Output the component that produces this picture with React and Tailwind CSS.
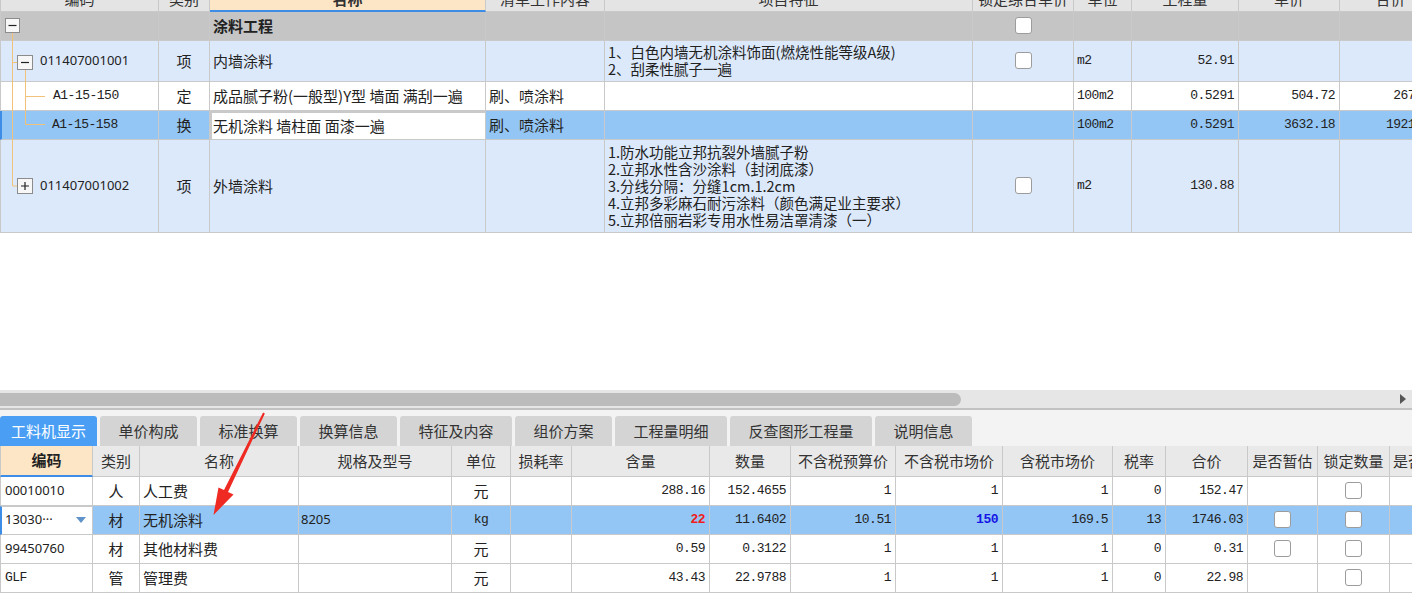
import React from 'react';

const TOP_GRID = 'grid grid-cols-[159px_51px_276px_119px_368px_101px_58px_107px_101px_102px] w-[1442px]';
const BOT_GRID = 'grid grid-cols-[93px_47px_159px_153px_59px_61px_138px_81px_105px_107px_110px_53px_82px_70px_72px_70px] w-[1460px]';
const MONO = "font-['Liberation_Mono',monospace] text-[13px] tracking-[-0.5px]";
const DIGI = "font-['Noto_Sans',sans-serif] text-[13px]";

const Cell = ({ className = '', children }) => (
  <div className={`flex items-center overflow-hidden whitespace-nowrap pb-[2px] border-r border-b border-[#c9c9c9] ${className}`}>
    {children}
  </div>
);

const Check = () => (
  <span className="block w-[17px] h-[17px] bg-white border border-[#9c9c9c] rounded-[3px]" />
);

const TreeLines = () => (
  <svg className="absolute left-0 top-0 pointer-events-none" width="159" height="233">
    <g stroke="#f3c27a" strokeWidth="1" fill="none">
      <path d="M12.5 33 V186 H17" />
      <path d="M12.5 62.5 H17" />
      <path d="M25.5 70 V124.5 H45" />
      <path d="M25.5 96.5 H45" />
    </g>
    <g fill="#f7f7f7" stroke="#8c8c8c">
      <rect x="5.5" y="18.5" width="14" height="14" />
      <rect x="17.5" y="55.5" width="15" height="14" />
      <rect x="17.5" y="178.5" width="15" height="15" />
    </g>
    <g stroke="#222" strokeWidth="1.2">
      <path d="M8.5 25.5 H16.5" />
      <path d="M21 62.5 H29" />
      <path d="M21 186 H29 M25 182 V190" />
    </g>
  </svg>
);

const Arrow = () => (
  <svg className="absolute left-0 top-0 pointer-events-none" width="1412" height="599">
    <polygon
      points="263.1,412.6 264.9,413.4 228,492 233.5,494.5 213.5,515 218.5,487.5 224,490"
      fill="#ee2a22"
    />
  </svg>
);

const TopTable = () => (
  <div className="relative h-[233px] overflow-hidden">
    {/* header (cut at top) */}
    <div className={`${TOP_GRID} h-[24px] -mt-[12px] bg-[#e4e4e4] text-[#333]`}>
      <Cell className="justify-center border-l border-l-[#c9c9c9]">编码</Cell>
      <Cell className="justify-center">类别</Cell>
      <Cell className="justify-center bg-[#fde6c6] border-b-2 border-b-[#3d8de6] font-bold">名称</Cell>
      <Cell className="justify-center">清单工作内容</Cell>
      <Cell className="justify-center">项目特征</Cell>
      <Cell className="justify-center">锁定综合单价</Cell>
      <Cell className="justify-center">单位</Cell>
      <Cell className="justify-center">工程量</Cell>
      <Cell className="justify-center">单价</Cell>
      <Cell className="justify-center">合价</Cell>
    </div>

    <div className={`${TOP_GRID} h-[29px] bg-[#c5c5c5]`}>
      <Cell className="border-l border-l-[#c9c9c9]" />
      <Cell />
      <Cell className="pl-[3px] font-bold">涂料工程</Cell>
      <Cell />
      <Cell />
      <Cell className="justify-center"><Check /></Cell>
      <Cell />
      <Cell />
      <Cell />
      <Cell />
    </div>

    <div className={`${TOP_GRID} h-[41px] bg-[#dce9fb]`}>
      <Cell className={`pl-[39px] border-l border-l-[#c9c9c9] ${DIGI}`}>011407001001</Cell>
      <Cell className="justify-center">项</Cell>
      <Cell className="pl-[3px]">内墙涂料</Cell>
      <Cell />
      <Cell className="pl-[3px]">
        <div className="leading-[17px] text-[14.5px]">
          <div>1、白色内墙无机涂料饰面(燃烧性能等级A级)</div>
          <div>2、刮柔性腻子一遍</div>
        </div>
      </Cell>
      <Cell className="justify-center"><Check /></Cell>
      <Cell className={`pl-[3px] ${MONO}`}>m2</Cell>
      <Cell className={`justify-end pr-[4px] ${MONO}`}>52.91</Cell>
      <Cell />
      <Cell />
    </div>

    <div className={`${TOP_GRID} h-[29px] bg-white`}>
      <Cell className={`pl-[52px] border-l border-l-[#c9c9c9] ${MONO}`}>A1-15-150</Cell>
      <Cell className="justify-center">定</Cell>
      <Cell className="pl-[3px]">成品腻子粉(一般型)Y型 墙面 满刮一遍</Cell>
      <Cell className="pl-[3px]">刷、喷涂料</Cell>
      <Cell />
      <Cell />
      <Cell className={`pl-[3px] ${MONO}`}>100m2</Cell>
      <Cell className={`justify-end pr-[4px] ${MONO}`}>0.5291</Cell>
      <Cell className={`justify-end pr-[4px] ${MONO}`}>504.72</Cell>
      <Cell className={`justify-end pr-[4px] ${MONO}`}>267.05</Cell>
    </div>

    <div className={`${TOP_GRID} h-[29px] bg-[#93c6f4]`}>
      <Cell className={`pl-[50px] border-l-2 border-l-[#3d8de6] ${MONO}`}>A1-15-158</Cell>
      <Cell className="justify-center">换</Cell>
      <Cell className="pl-[1px] bg-white border-2 border-[#3d8de6]">无机涂料 墙柱面 面漆一遍</Cell>
      <Cell className="pl-[3px]">刷、喷涂料</Cell>
      <Cell />
      <Cell />
      <Cell className={`pl-[3px] ${MONO}`}>100m2</Cell>
      <Cell className={`justify-end pr-[4px] ${MONO}`}>0.5291</Cell>
      <Cell className={`justify-end pr-[4px] ${MONO}`}>3632.18</Cell>
      <Cell className={`justify-end pr-[4px] ${MONO}`}>1921.79</Cell>
    </div>

    <div className={`${TOP_GRID} h-[93px] bg-[#dce9fb]`}>
      <Cell className={`pl-[39px] border-l border-l-[#c9c9c9] ${DIGI}`}>011407001002</Cell>
      <Cell className="justify-center">项</Cell>
      <Cell className="pl-[3px]">外墙涂料</Cell>
      <Cell />
      <Cell className="pl-[3px]">
        <div className="leading-[17px] text-[14.5px]">
          <div>1.防水功能立邦抗裂外墙腻子粉</div>
          <div>2.立邦水性含沙涂料（封闭底漆）</div>
          <div>3.分线分隔：分缝1cm.1.2cm</div>
          <div>4.立邦多彩麻石耐污涂料（颜色满足业主要求）</div>
          <div>5.立邦倍丽岩彩专用水性易洁罩清漆（一）</div>
        </div>
      </Cell>
      <Cell className="justify-center"><Check /></Cell>
      <Cell className={`pl-[3px] ${MONO}`}>m2</Cell>
      <Cell className={`justify-end pr-[4px] ${MONO}`}>130.88</Cell>
      <Cell />
      <Cell />
    </div>

    <TreeLines />
  </div>
);

const tabs = ['工料机显示', '单价构成', '标准换算', '换算信息', '特征及内容', '组价方案', '工程量明细', '反查图形工程量', '说明信息'];
const tabW = ['w-[97px]', 'w-[97px]', 'w-[97px]', 'w-[97px]', 'w-[112px]', 'w-[97px]', 'w-[112px]', 'w-[142px]', 'w-[97px]'];

const rows = [
  { code: '00010010', type: '人', name: '人工费', spec: '', unit: '元', qty: '288.16', num: '152.4655', p1: '1', p2: '1', p3: '1', tax: '0', sum: '152.47', est: false, lock: true },
  { code: '13030···', type: '材', name: '无机涂料', spec: '8205', unit: 'kg', qty: '22', num: '11.6402', p1: '10.51', p2: '150', p3: '169.5', tax: '13', sum: '1746.03', est: true, lock: true, sel: true },
  { code: '99450760', type: '材', name: '其他材料费', spec: '', unit: '元', qty: '0.59', num: '0.3122', p1: '1', p2: '1', p3: '1', tax: '0', sum: '0.31', est: true, lock: true },
  { code: 'GLF', type: '管', name: '管理费', spec: '', unit: '元', qty: '43.43', num: '22.9788', p1: '1', p2: '1', p3: '1', tax: '0', sum: '22.98', est: false, lock: true },
];

const BottomTable = () => (
  <div className="overflow-hidden">
    <div className={`${BOT_GRID} h-[31px] bg-[#e9e9e9] text-[#333]`}>
      <Cell className="justify-center bg-[#fde6c6] border-b-2 border-b-[#3d8de6] border-l border-l-[#c9c9c9] font-bold text-[#222]">编码</Cell>
      <Cell className="justify-center">类别</Cell>
      <Cell className="justify-center">名称</Cell>
      <Cell className="justify-center">规格及型号</Cell>
      <Cell className="justify-center">单位</Cell>
      <Cell className="justify-center">损耗率</Cell>
      <Cell className="justify-center">含量</Cell>
      <Cell className="justify-center">数量</Cell>
      <Cell className="justify-center">不含税预算价</Cell>
      <Cell className="justify-center">不含税市场价</Cell>
      <Cell className="justify-center">含税市场价</Cell>
      <Cell className="justify-center">税率</Cell>
      <Cell className="justify-center">合价</Cell>
      <Cell className="justify-center">是否暂估</Cell>
      <Cell className="justify-center">锁定数量</Cell>
      <Cell className="justify-start pl-[3px]">是否计价</Cell>
    </div>
    {rows.map((r) => (
      <div key={r.code} className={`${BOT_GRID} h-[29px] ${r.sel ? 'bg-[#93c6f4]' : 'bg-white'}`}>
        {r.sel ? (
          <Cell className="bg-white border border-[#6a6a6a] border-l-2 border-l-[#3d8de6] pl-[3px] pr-[6px] justify-between">
            <span className={DIGI}>{r.code}</span>
            <svg width="10" height="6" viewBox="0 0 10 6"><path d="M0 0 H10 L5 6 Z" fill="#5f93c9" /></svg>
          </Cell>
        ) : (
          <Cell className={`pl-[4px] border-l border-l-[#c9c9c9] ${r.code === 'GLF' ? MONO : DIGI}`}>{r.code}</Cell>
        )}
        <Cell className="justify-center">{r.type}</Cell>
        <Cell className="pl-[3px]">{r.name}</Cell>
        <Cell className={`pl-[2px] ${DIGI}`}>{r.spec}</Cell>
        <Cell className={`justify-center ${r.unit === 'kg' ? MONO : ''}`}>{r.unit}</Cell>
        <Cell />
        <Cell className={`justify-end pr-[4px] ${MONO} ${r.sel ? 'text-[#ee1c1c] font-bold' : ''}`}>{r.qty}</Cell>
        <Cell className={`justify-end pr-[4px] ${MONO}`}>{r.num}</Cell>
        <Cell className={`justify-end pr-[4px] ${MONO}`}>{r.p1}</Cell>
        <Cell className={`justify-end pr-[4px] ${MONO} ${r.sel ? 'text-[#1515e6] font-bold' : ''}`}>{r.p2}</Cell>
        <Cell className={`justify-end pr-[4px] ${MONO}`}>{r.p3}</Cell>
        <Cell className={`justify-end pr-[4px] ${MONO}`}>{r.tax}</Cell>
        <Cell className={`justify-end pr-[4px] ${MONO}`}>{r.sum}</Cell>
        <Cell className="justify-center">{r.est && <Check />}</Cell>
        <Cell className="justify-center">{r.lock && <Check />}</Cell>
        <Cell />
      </div>
    ))}
  </div>
);

export default function App() {
  return (
    <div className="relative w-[1412px] h-[599px] overflow-hidden bg-white text-[15px] text-[#222] leading-none font-['Noto_Sans_CJK_SC','Noto_Sans',sans-serif]">
      <TopTable />

      <div className="h-[157px] bg-white" />

      {/* horizontal scrollbar */}
      <div className="h-[18px] bg-[#e6e6e6] flex items-center justify-between pr-[6px]">
        <div className="w-[961px] h-[13px] bg-[#bcbcbc] rounded-r-[7px]" />
        <svg width="6" height="10" viewBox="0 0 6 10"><path d="M0 0 L6 5 L0 10 Z" fill="#555" /></svg>
      </div>
      <div className="h-[2px] bg-[#c2c2c2]" />

      {/* tabs */}
      <div className="h-[36px] bg-[#f3f3f3] pt-[6px] flex gap-[3px]">
        {tabs.map((t, i) => (
          <div
            key={t}
            className={`${tabW[i]} h-[30px] pb-[2px] flex items-center justify-center rounded-t-[3px] ${i === 0 ? 'bg-[#4a9ff5] text-white' : 'bg-[#d4d4d4] text-[#333]'}`}
          >
            {t}
          </div>
        ))}
      </div>

      <BottomTable />

      <Arrow />
    </div>
  );
}
